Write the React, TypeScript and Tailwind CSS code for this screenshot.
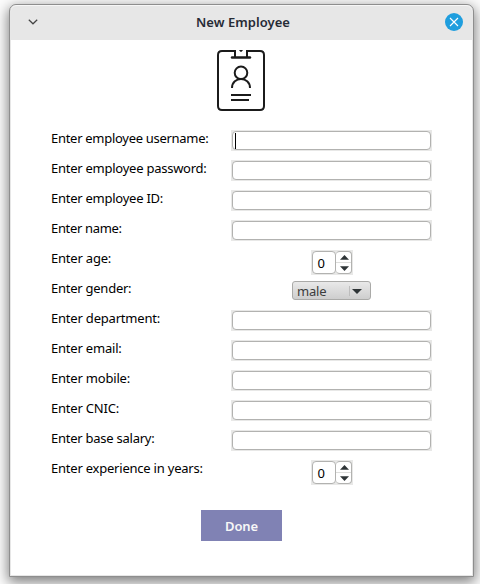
import React from "react";

type Kind = "text" | "number" | "select";

interface Field {
  label: string;
  kind: Kind;
  tracking: string;
  focused?: boolean;
}

const fields: Field[] = [
  { label: "Enter employee username:", kind: "text", tracking: "tracking-[-0.29px]", focused: true },
  { label: "Enter employee password:", kind: "text", tracking: "tracking-[-0.25px]" },
  { label: "Enter employee ID:", kind: "text", tracking: "tracking-[-0.25px]" },
  { label: "Enter name:", kind: "text", tracking: "tracking-[-0.33px]" },
  { label: "Enter age:", kind: "number", tracking: "tracking-[-0.2px]" },
  { label: "Enter gender:", kind: "select", tracking: "tracking-[-0.25px]" },
  { label: "Enter department:", kind: "text", tracking: "tracking-[-0.2px]" },
  { label: "Enter email:", kind: "text", tracking: "tracking-[-0.2px]" },
  { label: "Enter mobile:", kind: "text", tracking: "tracking-[-0.2px]" },
  { label: "Enter CNIC:", kind: "text", tracking: "tracking-[-0.2px]" },
  { label: "Enter base salary:", kind: "text", tracking: "tracking-[-0.25px]" },
  { label: "Enter experience in years:", kind: "number", tracking: "tracking-[-0.22px]" },
];

function TextInput({ focused }: { focused?: boolean }) {
  return (
    <div className="h-[21px] w-[201px] bg-[#e8e8e7] p-px">
      <div className="flex h-[19px] items-center rounded-[4px] border border-[#b2b2b0] bg-white pl-[2px]">
        {focused && <span className="h-4 w-px bg-black" />}
      </div>
    </div>
  );
}

function SpinBox() {
  return (
    <div className="flex h-[25px] w-[42px] bg-[#e8e8e7] p-px">
      <div className="flex w-6 items-center rounded-[4px] border border-[#b2b2b0] bg-white pl-[5px] text-[13px] leading-none text-black">
        <span className="pt-px">0</span>
      </div>
      <div className="flex w-4 flex-col rounded-[4px] border border-l-0 border-[#b2b2b0] bg-white">
        <div className="flex h-[11px] items-center justify-center border-b border-[#dededc] pl-[2px]">
          <svg width="9" height="5" viewBox="0 0 9 5" className="shrink-0"><path d="M0 4.8 L4.5 0 L9 4.8Z" fill="#2e3436" /></svg>
        </div>
        <div className="flex h-[10px] items-center justify-center pl-[2px] pt-px">
          <svg width="9" height="5" viewBox="0 0 9 5" className="shrink-0"><path d="M0 .2H9L4.5 5Z" fill="#2e3436" /></svg>
        </div>
      </div>
    </div>
  );
}

function SelectBox() {
  return (
    <div className="mt-px flex h-[19px] w-[79px] items-center rounded-[3px] border border-[#aaaaa8] bg-linear-to-b from-[#e9e9e9] to-[#cecece] pl-1 text-[13px] leading-none text-[#3c3c3c]">
      <span className="w-[52px] pt-[2px] tracking-[-0.2px]">male</span>
      <span className="h-[10px] w-px bg-[#bdbdbd]" />
      <svg width="10" height="5" viewBox="0 0 10 5" className="ml-[2px] mt-[2px]"><path d="M0 0H10L5 5Z" fill="#2e3436" /></svg>
    </div>
  );
}

function BadgeIcon() {
  return (
    <svg width="48" height="61" viewBox="0 0 48 61" fill="none" stroke="#1b1b1b" strokeWidth="2">
      <path d="M18 1H5Q1 1 1 5V56Q1 60 5 60H43Q47 60 47 56V5Q47 1 43 1H30" />
      <path d="M18 0V7M30 0V7" />
      <path d="M15 7.5H33" strokeWidth="2.4" strokeLinecap="round" />
      <path d="M22 0H26L24.7 1.7H23.3Z" fill="#1b1b1b" stroke="none" />
      <circle cx="24" cy="22.8" r="6.3" />
      <path d="M15 38C15 26 33 26 33 38" />
      <path d="M14 45H34M14 50H32" />
    </svg>
  );
}

export default function App() {
  return (
    <div className="h-[584px] w-[480px] overflow-hidden bg-[#fcfcfc] pl-[9px] pt-1 font-['Noto_Sans','Open_Sans',sans-serif]">
      <div className="h-[573px] w-[465px] rounded-t-[7px] border border-[#8e8e8e] bg-[#e7e7e7] px-px pb-px shadow-[0_4px_13px_1px_rgba(0,0,0,0.5)]">
        <header className="flex h-[35px] items-start rounded-t-[6px] border-t border-[#f7f7f7]">
          <div className="flex w-11 justify-center pt-[13px]">
            <svg width="10" height="6" viewBox="0 0 10 6" fill="none" stroke="#444" strokeWidth="1.2"><path d="M.8 .8L5 4.8L9.2 .8" /></svg>
          </div>
          <h1 className="flex-1 whitespace-nowrap pr-1 pt-[7px] text-center text-[13px] font-semibold leading-[18px] tracking-[0.05px] text-[#262b36]">New Employee</h1>
          <div className="flex w-[37px] pl-[10px] pt-[7px]">
            <svg width="18" height="18" viewBox="0 0 18 18"><circle cx="9" cy="9" r="9" fill="#1f9ede" /><path d="M5 5L13 13M13 5L5 13" stroke="white" strokeWidth="1.1" /></svg>
          </div>
        </header>
        <main className="h-[535px] bg-white pl-10 pt-[10px]">
          <div className="flex h-[79px] w-[380px] justify-center">
            <BadgeIcon />
          </div>
          {fields.map((f) => (
            <div key={f.label} className="flex h-[30px] items-start">
              <label className={`w-[180px] whitespace-nowrap text-[13px] leading-[18px] text-black ${f.tracking}`}>
                <span>{f.label}</span>
              </label>
              <div className="flex w-[201px] justify-center pt-px">
                {f.kind === "text" && <TextInput focused={f.focused} />}
                {f.kind === "number" && <SpinBox />}
                {f.kind === "select" && <SelectBox />}
              </div>
            </div>
          ))}
          <div className="flex w-[381px] justify-center pt-[21px]">
            <button className="h-[31px] w-[81px] bg-[#8082b4] pt-px text-[13px] font-semibold leading-[30px] tracking-[-0.1px] text-[#f7f7f7]">Done</button>
          </div>
        </main>
      </div>
    </div>
  );
}
